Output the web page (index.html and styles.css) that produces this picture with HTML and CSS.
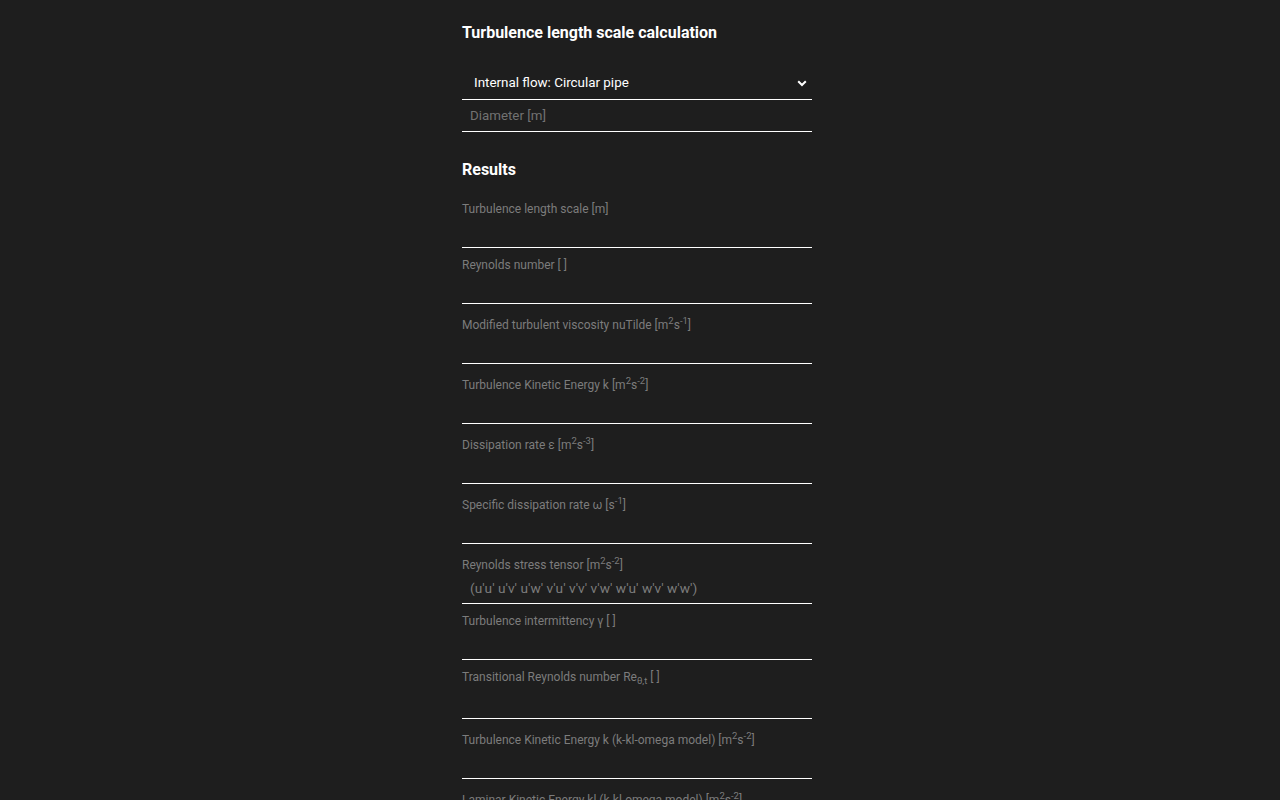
FILE: index.html
```html
<!DOCTYPE html>
<html lang="en">
<head>
<meta charset="utf-8">
<title>Turbulence length scale calculation</title>
<link rel="stylesheet" href="styles.css">
</head>
<body>
<main class="page">
  <h2 class="title">Turbulence length scale calculation</h2>
  <div class="select-wrap">
    <select class="select">
      <option>Internal flow: Circular pipe</option>
      <option>Internal flow: Rectangular duct</option>
      <option>External flow</option>
    </select>
    <svg class="chevron" width="10" height="7" viewBox="0 0 10 7" aria-hidden="true"><path d="M1.2 1.2 L5 5 L8.8 1.2" fill="none" stroke="#fff" stroke-width="2"/></svg>
  </div>
  <input class="input" type="text" placeholder="Diameter [m]">

  <h2 class="results-title">Results</h2>
  <div class="fields">
    <label class="field"><span class="label">Turbulence length scale [m]</span><input class="output" readonly></label>
    <label class="field"><span class="label">Reynolds number [ ]</span><input class="output" readonly></label>
    <label class="field"><span class="label">Modified turbulent viscosity nuTilde [m<sup>2</sup>s<sup>-1</sup>]</span><input class="output" readonly></label>
    <label class="field"><span class="label">Turbulence Kinetic Energy k [m<sup>2</sup>s<sup>-2</sup>]</span><input class="output" readonly></label>
    <label class="field"><span class="label">Dissipation rate ε [m<sup>2</sup>s<sup>-3</sup>]</span><input class="output" readonly></label>
    <label class="field"><span class="label">Specific dissipation rate ω [s<sup>-1</sup>]</span><input class="output" readonly></label>
    <label class="field"><span class="label">Reynolds stress tensor [m<sup>2</sup>s<sup>-2</sup>]</span><input class="output output-tensor" readonly placeholder="(u'u' u'v' u'w' v'u' v'v' v'w' w'u' w'v' w'w')"></label>
    <label class="field"><span class="label">Turbulence intermittency γ [ ]</span><input class="output" readonly></label>
    <label class="field"><span class="label">Transitional Reynolds number Re<sub>θ,t</sub> [ ]</span><input class="output" readonly></label>
    <label class="field"><span class="label">Turbulence Kinetic Energy k (k-kl-omega model) [m<sup>2</sup>s<sup>-2</sup>]</span><input class="output" readonly></label>
    <label class="field"><span class="label">Laminar Kinetic Energy kl (k-kl-omega model) [m<sup>2</sup>s<sup>-2</sup>]</span><input class="output" readonly></label>
    <label class="field"><span class="label">Specific dissipation rate ω (k-kl-omega model) [s<sup>-1</sup>]</span><input class="output" readonly></label>
  </div>
</main>
</body>
</html>
```

FILE: styles.css
```css
html, body {
  margin: 0;
  padding: 0;
  background: #1e1e1e;
}

body {
  font-family: Roboto, "Liberation Sans", Arial, sans-serif;
  color: #ffffff;
}

.page {
  width: 350px;
  margin-left: calc(50% - 178px);
  padding-top: 23px;
  padding-bottom: 40px;
}

.title,
.results-title {
  margin: 0;
  font-size: 16px;
  font-weight: 700;
  line-height: 19px;
  color: #ffffff;
}

.select-wrap {
  position: relative;
  margin-top: 23px;
}

.select {
  appearance: none;
  -webkit-appearance: none;
  display: block;
  width: 100%;
  height: 35px;
  margin: 0;
  padding: 0 30px 0 12px;
  background: transparent;
  border: 0;
  border-bottom: 1px solid #ffffff;
  border-radius: 0;
  color: #ffffff;
  font-family: Roboto, "Liberation Sans", Arial, sans-serif;
  font-size: 13.4px;
  outline: none;
}

.select option {
  background: #1e1e1e;
  color: #ffffff;
}

.chevron {
  position: absolute;
  right: 5px;
  top: 15px;
  pointer-events: none;
}

.input {
  display: block;
  box-sizing: border-box;
  width: 100%;
  height: 32px;
  margin: 0;
  padding: 0 8px;
  background: transparent;
  border: 0;
  border-bottom: 1px solid #ffffff;
  color: #ffffff;
  font-family: Roboto, "Liberation Sans", Arial, sans-serif;
  font-size: 13.33px;
  outline: none;
}

.input::placeholder {
  color: #727272;
}

.results-title {
  margin-top: 28px;
}

.fields {
  display: flex;
  flex-direction: column;
  margin-top: 13px;
}

.field {
  display: flex;
  flex-direction: column;
  padding-top: 10px;
}

.label {
  font-size: 12px;
  line-height: 14px;
  color: #7c7c7c;
}

.label sup {
  font-size: 9.5px;
}

.label sub {
  font-size: 9.5px;
  line-height: 12px;
}

.output {
  display: block;
  box-sizing: border-box;
  width: 100%;
  height: 32px;
  margin: 0;
  padding: 0 8px;
  background: transparent;
  border: 0;
  border-bottom: 1px solid #ffffff;
  color: #ffffff;
  font-family: Roboto, "Liberation Sans", Arial, sans-serif;
  font-size: 13.33px;
  outline: none;
}

.output-tensor {
  font-size: 13.7px;
}

.output::placeholder {
  color: #7c7c7c;
}
```
